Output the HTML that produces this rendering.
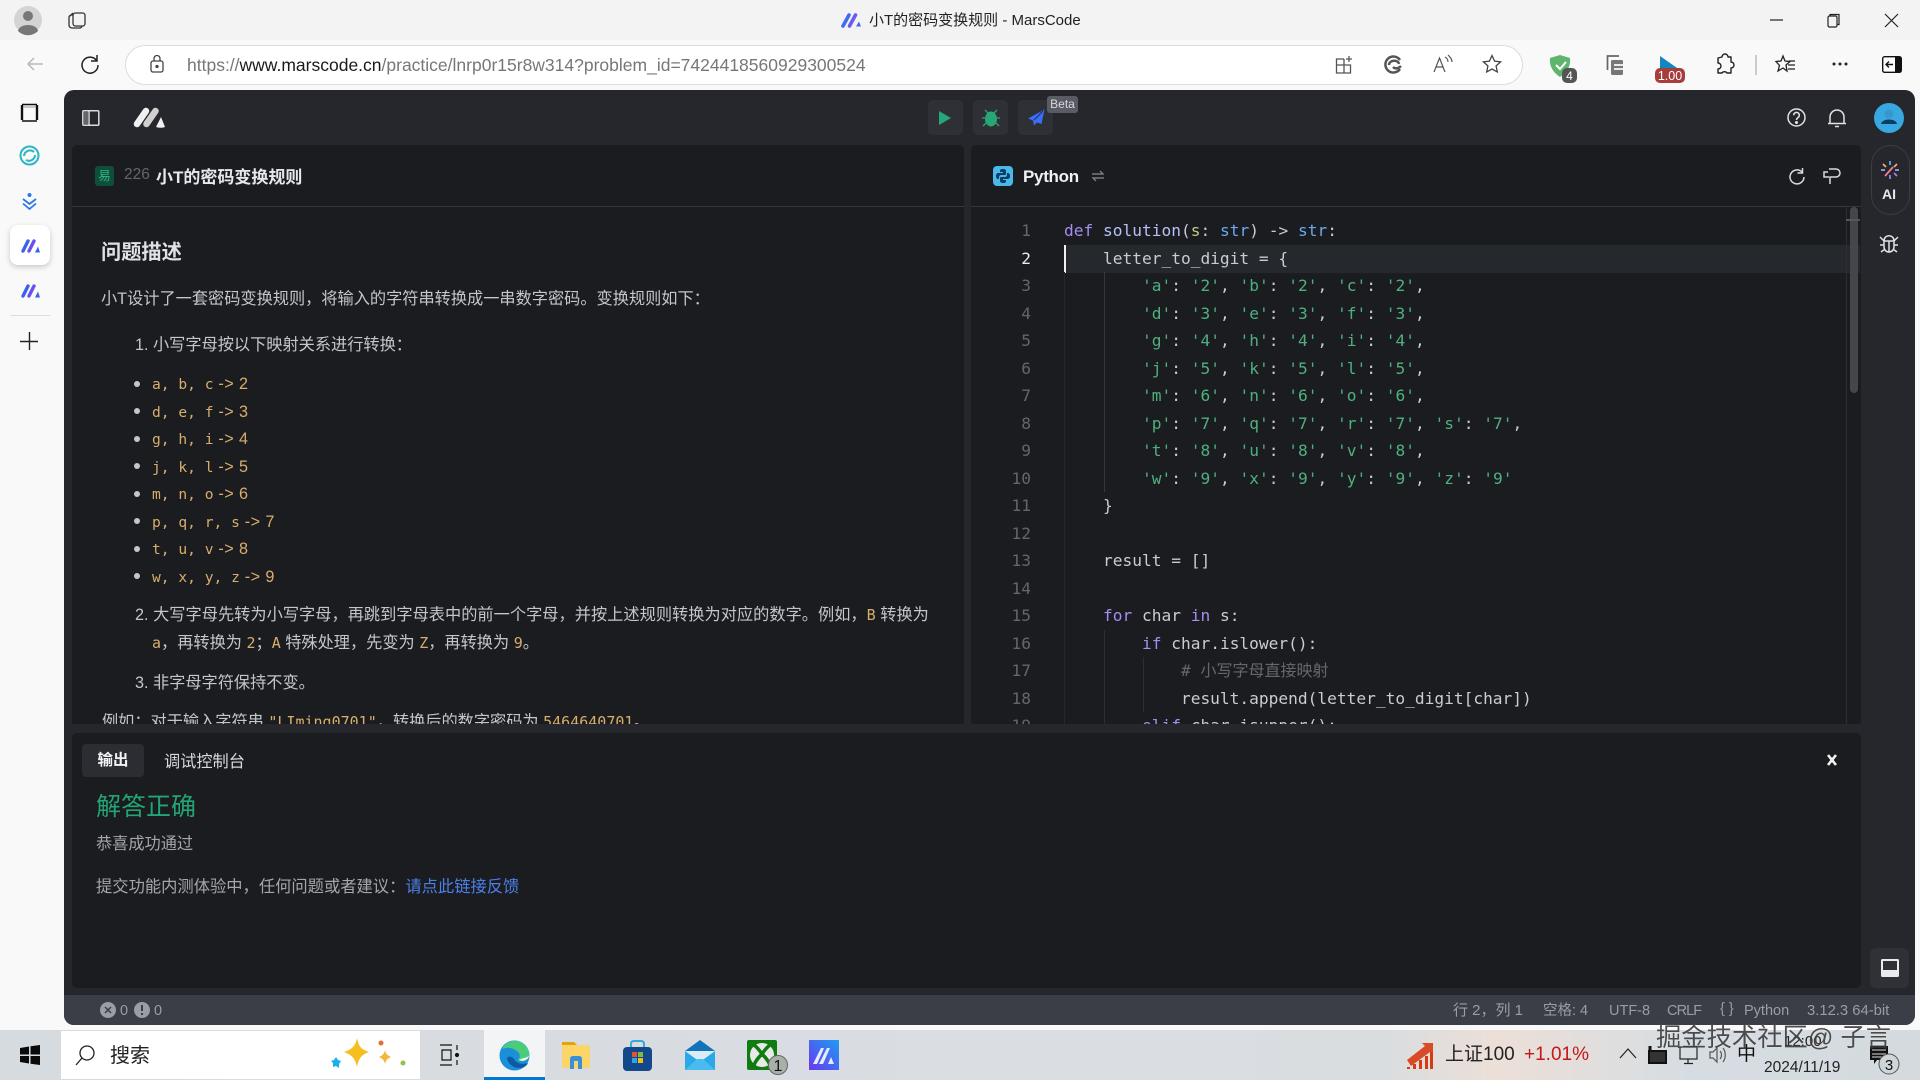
<!DOCTYPE html>
<html lang="zh-CN"><head><meta charset="utf-8"><title>小T的密码变换规则 - MarsCode</title>
<style>
*{box-sizing:border-box;margin:0;padding:0}
html,body{width:1920px;height:1080px;overflow:hidden;background:#f9f9f9;font-family:"Liberation Sans","Noto Sans CJK SC",sans-serif}
.a{position:absolute}
.t{position:absolute;white-space:nowrap;line-height:20px;height:20px}
svg{position:absolute;overflow:visible}
.code{position:absolute;left:1064px;top:217.5px;font:16.2px/27.5px "DejaVu Sans Mono","Noto Sans CJK SC",monospace;color:#c9ccd2;white-space:pre}
.code div{height:27.5px}
.ln{position:absolute;left:980px;width:51px;top:217.5px;font:16.2px/27.5px "DejaVu Sans Mono",monospace;color:#63666c;text-align:right}
.ln div{height:27.5px}
.k{color:#a48cf0}.f{color:#b6c1f5}.p{color:#c6c98a}.b{color:#6aa9ef}.s{color:#4fb07f}.c{color:#64676d}
.m{font-family:"DejaVu Sans Mono",monospace;font-size:14.6px;color:#d9ae6c}
.m i{font-style:normal;font-family:"Liberation Sans";font-size:16.2px;letter-spacing:.4px}
.body{color:#c3c6cc;font-size:16.2px}
.body .m{font-size:15px}
.st{font-size:14.5px;color:#9a9da3;top:1001px}
</style></head><body>

<!-- browser chrome -->
<div class="a" style="left:0;top:0;width:1920px;height:40px;background:#f3f3f3"></div>
<svg style="left:14px;top:6px" width="28" height="28" viewBox="0 0 28 28"><circle cx="14" cy="14" r="14" fill="#d4d4d4"/><circle cx="14" cy="10" r="5" fill="#777"/><path d="M4 25c1-8 19-8 20 0a14 14 0 0 1-20 0z" fill="#777"/></svg>
<svg style="left:67px;top:10px" width="20" height="20" viewBox="0 0 20 20" fill="none" stroke="#333" stroke-width="1.3"><rect x="6" y="3" width="12" height="13" rx="2.5"/><path d="M6 5H4.500A2.500 2.500 0 0 0 2 7.500V15a3 3 0 0 0 3 3h7.500a2.500 2.500 0 0 0 2.500-2M3 6l3-3"/></svg>
<svg style="left:840px;top:12px" width="22" height="16" viewBox="0 0 22 16" fill="none" stroke-linecap="round"><path d="M3 14 9 3" stroke="#3d6ef2" stroke-width="3.600"/><path d="M9.500 14 15.500 3" stroke="#6a5cf0" stroke-width="3.600"/><path d="M16 14.500l3-5 2 5z" fill="#4a66ee"/></svg>
<div class="t" style="left:869px;top:11px;font-size:15px;color:#222">小T的密码变换规则 - MarsCode</div>
<svg style="left:1768px;top:14px" width="140" height="14" fill="none" stroke="#222" stroke-width="1.200"><path d="M2 6h13"/><rect x="60" y="2" width="9" height="11" rx="1.500"/><path d="M62 2V.5h9v10h-2M117 0l13 13M130 0l-13 13"/></svg>

<!-- address bar -->
<div class="a" style="left:125px;top:45px;width:1398px;height:40px;background:#fff;border:1.500px solid #dcdcdc;border-radius:20px"></div>
<svg style="left:26px;top:55px" width="18" height="18" fill="none" stroke="#b9b9b9" stroke-width="1.500"><path d="M17 9H2M8 3 2 9l6 6"/></svg>
<svg style="left:80px;top:54px" width="20" height="20" fill="none" stroke="#222" stroke-width="1.500"><path d="M16.500 6.500A8 8 0 1 0 18 11M17 1v6h-6"/></svg>
<svg style="left:150px;top:55px" width="15" height="18" fill="none" stroke="#444" stroke-width="1.300"><rect x="1" y="6" width="12" height="11" rx="2"/><path d="M4 6V3.500a3 3 0 0 1 6 0V6"/><circle cx="7" cy="11.500" r="1" fill="#444"/></svg>
<div class="t" style="left:187px;top:55px;font-size:17.5px;color:#777">https://<span style="color:#1a1a1a">www.marscode.cn</span>/practice/lnrp0r15r8w314?problem_id=7424418560929300524</div>
<svg style="left:1334px;top:55px" width="20" height="20" fill="none" stroke="#555" stroke-width="1.300"><path d="M10 4H2.500v14h14v-8H2.500M10 4v14M15 1v6M12 4h6"/></svg>
<svg style="left:1383px;top:54px" width="20" height="20" fill="none" stroke="#555" stroke-width="2.500"><path d="M17 6A8 8 0 1 0 17 15M6 11c0-5 9-6 10-1M10 13c2 2 5 2 8-1"/></svg>
<svg style="left:1433px;top:54px" width="20" height="20" fill="none" stroke="#555" stroke-width="1.200"><path d="M1 18 6.500 4 12 18M3 13h7M12 3c2 1 3 3 3 5M15 1c2 2 4 4 4 7"/></svg>
<svg style="left:1482px;top:54px" width="20" height="20" fill="none" stroke="#444" stroke-width="1.300"><path d="m10 1.500 2.600 5.600 6 .700-4.500 4.100 1.200 6L10 15l-5.300 2.900 1.200-6L1.400 7.800l6-.700z"/></svg>
<svg style="left:1549px;top:54px" width="30" height="30"><path d="M1 4 11 1l10 3c1 9-4 15-10 19C5 19 0 13 1 4z" fill="#5fb56b"/><path d="m7 11 4 4 6-7" stroke="#fff" stroke-width="2" fill="none"/><rect x="13" y="14" width="15" height="15" rx="5" fill="#555"/><text x="20.500" y="26" font-size="12" fill="#fff" text-anchor="middle" font-family="Liberation Sans">4</text></svg>
<svg style="left:1605px;top:55px" width="20" height="22" fill="none" stroke="#666" stroke-width="1.700"><path d="M14 1H2.500v14"/><rect x="6" y="5" width="12" height="15" rx="1.500" fill="#777" stroke="none"/><path d="M9 10h9M9 14h9" stroke="#f9f9f9"/></svg>
<svg style="left:1654px;top:56px" width="32" height="28"><path d="M6 0v14h20z" fill="#1186c1"/><rect x="1" y="12" width="30" height="15" rx="5" fill="#a83d3d"/><text x="16" y="24" font-size="12.500" fill="#fff" text-anchor="middle" font-family="Liberation Sans">1.00</text></svg>
<svg style="left:1715px;top:54px" width="20" height="22" fill="none" stroke="#222" stroke-width="1.400"><path d="M7 3a3 3 0 0 1 6 0h3v5a3 3 0 0 1 0 6v5h-4a3 3 0 0 0-5 0H3v-4a3 3 0 0 0 0-6V4z" stroke-linejoin="round"/></svg>
<div class="a" style="left:1755px;top:55px;width:1.500px;height:20px;background:#ccc"></div>
<svg style="left:1775px;top:55px" width="22" height="20" fill="none" stroke="#222" stroke-width="1.300"><path d="m8 1 2 5 5 .5-4 3.500 1 6-4-3-5 3 1.500-5.500L1 6.500l5-.5zM14 6h6M13 10h7M13 14h7"/></svg>
<svg style="left:1832px;top:62px" width="16" height="4" fill="#222"><circle cx="2" cy="2" r="1.500"/><circle cx="8" cy="2" r="1.500"/><circle cx="14" cy="2" r="1.500"/></svg>
<svg style="left:1882px;top:56px" width="20" height="17"><rect x=".7" y=".7" width="18.600" height="15.600" rx="2" fill="#fff" stroke="#111" stroke-width="1.400"/><rect x="13" y="1" width="6" height="15" fill="#111"/><path d="M11 8.500H4M7 5.500l-3 3 3 3" stroke="#111" fill="none" stroke-width="1.400"/></svg>

<!-- left sidebar -->
<svg style="left:20px;top:103px" width="19" height="19" fill="none"><path d="M2 17V2M17 17V2" stroke="#111" stroke-width="2.400"/><path d="M2 1.500h15M2 18h15" stroke="#111" stroke-width="1.400"/><path d="M3 4h13" stroke="#999" stroke-width="1"/></svg>
<svg style="left:19px;top:145px" width="21" height="21" fill="none" stroke="#2cb5c5" stroke-width="2"><circle cx="10.500" cy="10.500" r="9"/><path d="M5 11a6 6 0 0 1 10-4M16 10a6 6 0 0 1-9 5"/></svg>
<svg style="left:20px;top:192px" width="19" height="18" fill="none" stroke="#2878e8" stroke-width="1.800"><path d="M3 7l6.500 5L16 7M3 11.500 9.500 17 16 11.500"/><circle cx="9.500" cy="3" r="2" fill="#2878e8" stroke="none"/></svg>
<div class="a" style="left:10px;top:225px;width:40px;height:40px;background:#fff;border-radius:8px;box-shadow:0 2px 6px rgba(0,0,0,.2)"></div>
<svg style="left:20px;top:238px" width="21" height="15" viewBox="0 0 21 15" fill="none" stroke-linecap="round"><path d="M3 13 8 3" stroke="#3d60ee" stroke-width="3.400"/><path d="M9 13 14 3" stroke="#6a50ee" stroke-width="3.400"/><path d="M15 14.500l3-6 2 6z" fill="#3d60ee"/></svg>
<svg style="left:20px;top:283px" width="21" height="15" viewBox="0 0 21 15" fill="none" stroke-linecap="round"><path d="M3 13 8 3" stroke="#3d60ee" stroke-width="3.400"/><path d="M9 13 14 3" stroke="#6a50ee" stroke-width="3.400"/><path d="M15 14.500l3-6 2 6z" fill="#3d60ee"/></svg>
<div class="a" style="left:10px;top:315px;width:40px;height:1px;background:#ddd"></div>
<svg style="left:20px;top:332px" width="18" height="18" stroke="#222" stroke-width="1.400"><path d="M9.500 0v18M0 9.500h18"/></svg>

<!-- app -->
<div class="a" style="left:64px;top:90px;width:1851px;height:935px;background:#25272c;border-radius:10px"></div>
<div class="a" style="left:64px;top:995px;width:1851px;height:30px;background:#3c3e47;border-radius:0 0 10px 10px"></div>
<svg style="left:82px;top:110px" width="18" height="16" fill="none" stroke="#d8dade" stroke-width="1.500"><rect x=".8" y=".8" width="16" height="14.400" rx="1"/><path d="M7 1v14"/><rect x="2" y="2" width="4.500" height="12" fill="#666" stroke="none"/></svg>
<svg style="left:132px;top:106px" width="35" height="22" viewBox="0 0 35 22" fill="none" stroke-linecap="round"><path d="M5 18 14 5" stroke="#f0f0f0" stroke-width="6.500"/><path d="M14.500 18 23.500 5" stroke="#cfcfcf" stroke-width="6.500"/><path d="M24 21l5-10 4 10q-4 1.500-9 0z" fill="#f0f0f0"/></svg>
<div class="a" style="left:928px;top:100px;width:35px;height:35px;background:#2e3036;border-radius:5px"></div>
<div class="a" style="left:973px;top:100px;width:35px;height:35px;background:#2e3036;border-radius:5px"></div>
<div class="a" style="left:1018px;top:100px;width:35px;height:35px;background:#2e3036;border-radius:5px"></div>
<svg style="left:939px;top:111px" width="12" height="14"><path d="M0 0 12 7 0 14z" fill="#27a776"/></svg>
<svg style="left:981px;top:108px" width="20" height="20" fill="#27a776" stroke="#27a776" stroke-width="1.300"><ellipse cx="10" cy="11" rx="6" ry="7.500" stroke="none"/><path d="M4 2l3 3M16 2l-3 3M1 10h3M19 10h-3M2 18l3-3M18 18l-3-3" fill="none"/></svg>
<svg style="left:1028px;top:109px" width="17" height="17"><path d="M16.500.5 0 9.500l5 2 1 5 3-3 4.500 1.500z" fill="#3c6ef5"/><path d="M15 2 6 11" stroke="#1a2a66"/></svg>
<div class="a" style="left:1047px;top:96px;width:31px;height:17px;background:#5a5c65;border-radius:3px;color:#d8d8da;font-size:12px;line-height:17px;text-align:center">Beta</div>
<svg style="left:1787px;top:108px" width="19" height="19" fill="none" stroke="#e0e2e6" stroke-width="1.500"><circle cx="9.500" cy="9.500" r="8.500"/><path d="M6.700 7.200a2.800 2.800 0 1 1 4.400 2.300c-1 .7-1.600 1.200-1.600 2.500"/><circle cx="9.500" cy="14.500" r=".8" fill="#e0e2e6"/></svg>
<svg style="left:1828px;top:108px" width="18" height="20" fill="none" stroke="#e0e2e6" stroke-width="1.500"><path d="M2 15.500V9a7 7 0 0 1 14 0v6.500zM0 15.500h18M7 18.500h4"/></svg>
<svg style="left:1874px;top:103px" width="30" height="30"><circle cx="15" cy="15" r="15" fill="#3aa8e0"/><circle cx="15" cy="11" r="4.500" fill="#3498cc"/><path d="M7 21c1-6 15-6 16 0z" fill="#0c3c66"/></svg>

<!-- problem panel -->
<div class="a" style="left:72px;top:145px;width:892px;height:579px;background:#1a1c20;border-radius:5px 5px 0 0;overflow:hidden">
  <div class="a" style="left:0;top:61px;width:892px;height:1px;background:#35373c"></div>
</div>
<div class="a" style="left:95px;top:166px;width:19px;height:20px;background:#0f4e3a;border-radius:3px;color:#31b585;font-size:12.500px;line-height:20px;text-align:center">易</div>
<div class="t" style="left:124px;top:165px;font-size:15.500px;color:#63666c">226</div>
<div class="t" style="left:156px;top:167.500px;font-size:17px;font-weight:700;color:#e6e8ea">小T的密码变换规则</div>
<div class="t" style="left:101px;top:242.500px;font-size:20.200px;font-weight:700;color:#dfe1e4">问题描述</div>
<div class="t body" style="left:101px;top:289px">小T设计了一套密码变换规则，将输入的字符串转换成一串数字密码。变换规则如下：</div>
<div class="t body" style="left:135px;top:334.500px">1. 小写字母按以下映射关系进行转换：</div>
<div class="a" style="left:132px;top:370px;width:40px;height:230px;color:#c3c6cc">
  <div class="a" style="left:2px;top:10.500px;width:6px;height:6px;border-radius:50%;background:#c3c6cc"></div>
  <div class="a" style="left:2px;top:38px;width:6px;height:6px;border-radius:50%;background:#c3c6cc"></div>
  <div class="a" style="left:2px;top:65.500px;width:6px;height:6px;border-radius:50%;background:#c3c6cc"></div>
  <div class="a" style="left:2px;top:93px;width:6px;height:6px;border-radius:50%;background:#c3c6cc"></div>
  <div class="a" style="left:2px;top:120.500px;width:6px;height:6px;border-radius:50%;background:#c3c6cc"></div>
  <div class="a" style="left:2px;top:148px;width:6px;height:6px;border-radius:50%;background:#c3c6cc"></div>
  <div class="a" style="left:2px;top:175.500px;width:6px;height:6px;border-radius:50%;background:#c3c6cc"></div>
  <div class="a" style="left:2px;top:203px;width:6px;height:6px;border-radius:50%;background:#c3c6cc"></div>
</div>
<div class="t m" style="left:152px;top:374px">a, b, c<i> -&gt; 2</i></div>
<div class="t m" style="left:152px;top:401.500px">d, e, f<i> -&gt; 3</i></div>
<div class="t m" style="left:152px;top:429px">g, h, i<i> -&gt; 4</i></div>
<div class="t m" style="left:152px;top:456.500px">j, k, l<i> -&gt; 5</i></div>
<div class="t m" style="left:152px;top:484px">m, n, o<i> -&gt; 6</i></div>
<div class="t m" style="left:152px;top:511.500px">p, q, r, s<i> -&gt; 7</i></div>
<div class="t m" style="left:152px;top:539px">t, u, v<i> -&gt; 8</i></div>
<div class="t m" style="left:152px;top:566.500px">w, x, y, z<i> -&gt; 9</i></div>
<div class="t body" style="left:135px;top:605.300px;letter-spacing:.03px">2. 大写字母先转为小写字母，再跳到字母表中的前一个字母，并按上述规则转换为对应的数字。例如，<span class="m">B</span> 转换为</div>
<div class="t body" style="left:152px;top:632.500px"><span class="m">a</span>，再转换为 <span class="m">2</span>；<span class="m">A</span> 特殊处理，先变为 <span class="m">Z</span>，再转换为 <span class="m">9</span>。</div>
<div class="t body" style="left:135px;top:672.500px">3. 非字母字符保持不变。</div>
<div class="a" style="left:102px;top:708px;width:800px;height:16px;overflow:hidden"><div class="t body" style="left:0;top:4px">例如：对于输入字符串 <span class="m">"LIming0701"</span>，转换后的数字密码为 <span class="m">5464640701</span>。</div></div>

<!-- editor panel -->
<div class="a" style="left:971px;top:145px;width:890px;height:579px;background:#1a1c20;border-radius:5px 5px 0 0">
  <div class="a" style="left:0;top:61px;width:890px;height:1px;background:#35373c"></div>
</div>
<svg style="left:993px;top:166px" width="20" height="20"><rect width="20" height="20" rx="4" fill="#4ab8ea"/><path d="M10 3c-3 0-3 1-3 3h3v1H5c-2 0-2 3-2 3s0 3 2 3h1v-2c0-1 1-2 2-2h4c1 0 1-1 1-2V5c0-1-1-2-3-2z" fill="#0c3f63"/><path d="M10 17c3 0 3-1 3-3h-3v-1h5c2 0 2-3 2-3s0-3-2-3h-1v2c0 1-1 2-2 2H8c-1 0-1 1-1 2v2c0 1 1 2 3 2z" fill="#0c3f63"/></svg>
<div class="t" style="left:1023px;top:167px;font-size:17px;font-weight:700;color:#f0f1f3;letter-spacing:-.3px">Python</div>
<svg style="left:1092px;top:170px" width="12" height="12" stroke="#8a8d93" stroke-width="1.200" fill="none"><path d="M0 4h11L8 1M12 8H1l3 3"/></svg>
<svg style="left:1788px;top:168px" width="17" height="17" fill="none" stroke="#d8dade" stroke-width="1.500"><path d="M14 4a7 7 0 1 0 2 5M14.500 0v5h-5"/></svg>
<svg style="left:1823px;top:167px" width="18" height="18" fill="none" stroke="#d8dade" stroke-width="1.500"><path d="M6 2h7a4 4 0 0 1 0 8H7v7M5 5H1v5h5"/></svg>
<div class="a" style="left:1064px;top:245px;width:796px;height:27.500px;background:#25282d"></div>
<div class="a" style="left:1064px;top:245px;width:2px;height:27.500px;background:#f0f0f0"></div>
<div class="a" style="left:1064px;top:272px;width:1px;height:452px;background:#26282d"></div>
<div class="a" style="left:1104px;top:272px;width:1px;height:220px;background:#35373c"></div>
<div class="a" style="left:1104px;top:630px;width:1px;height:94px;background:#2c2e33"></div>
<div class="a" style="left:1143px;top:657px;width:1px;height:55px;background:#2c2e33"></div>
<div class="a" style="left:1846px;top:206px;width:1px;height:518px;background:#2c2e33"></div>
<div class="a" style="left:1850px;top:207px;width:8px;height:186px;background:#44464c;border-radius:4px"></div>
<div class="a" style="left:1846px;top:219px;width:14px;height:2px;background:#55575c"></div>
<div class="a" style="left:971px;top:207px;width:880px;height:517px;overflow:hidden">
 <div class="ln" style="left:9px;top:10px"><div>1</div><div style="color:#e8eaee">2</div><div>3</div><div>4</div><div>5</div><div>6</div><div>7</div><div>8</div><div>9</div><div>10</div><div>11</div><div>12</div><div>13</div><div>14</div><div>15</div><div>16</div><div>17</div><div>18</div><div>19</div></div>
 <div class="code" style="left:93px;top:10px"><div><span class="k">def</span> <span class="f">solution</span>(<span class="p">s</span>: <span class="b">str</span>) -&gt; <span class="b">str</span>:</div><div>    letter_to_digit = {</div><div>        <span class="s">'a'</span>: <span class="s">'2'</span>, <span class="s">'b'</span>: <span class="s">'2'</span>, <span class="s">'c'</span>: <span class="s">'2'</span>,</div><div>        <span class="s">'d'</span>: <span class="s">'3'</span>, <span class="s">'e'</span>: <span class="s">'3'</span>, <span class="s">'f'</span>: <span class="s">'3'</span>,</div><div>        <span class="s">'g'</span>: <span class="s">'4'</span>, <span class="s">'h'</span>: <span class="s">'4'</span>, <span class="s">'i'</span>: <span class="s">'4'</span>,</div><div>        <span class="s">'j'</span>: <span class="s">'5'</span>, <span class="s">'k'</span>: <span class="s">'5'</span>, <span class="s">'l'</span>: <span class="s">'5'</span>,</div><div>        <span class="s">'m'</span>: <span class="s">'6'</span>, <span class="s">'n'</span>: <span class="s">'6'</span>, <span class="s">'o'</span>: <span class="s">'6'</span>,</div><div>        <span class="s">'p'</span>: <span class="s">'7'</span>, <span class="s">'q'</span>: <span class="s">'7'</span>, <span class="s">'r'</span>: <span class="s">'7'</span>, <span class="s">'s'</span>: <span class="s">'7'</span>,</div><div>        <span class="s">'t'</span>: <span class="s">'8'</span>, <span class="s">'u'</span>: <span class="s">'8'</span>, <span class="s">'v'</span>: <span class="s">'8'</span>,</div><div>        <span class="s">'w'</span>: <span class="s">'9'</span>, <span class="s">'x'</span>: <span class="s">'9'</span>, <span class="s">'y'</span>: <span class="s">'9'</span>, <span class="s">'z'</span>: <span class="s">'9'</span></div><div>    }</div><div> </div><div>    result = []</div><div> </div><div>    <span class="k">for</span> char <span class="k">in</span> s:</div><div>        <span class="k">if</span> char.islower():</div><div>            <span class="c"># <span style="font-size:16px">小写字母直接映射</span></span></div><div>            result.append(letter_to_digit[char])</div><div>        <span class="k">elif</span> char.isupper():</div></div>
</div>
<!-- AI capsule -->
<div class="a" style="left:1870.500px;top:145px;width:39px;height:70px;border:1.500px solid #3a3c42;border-radius:20px"></div>
<svg style="left:1881px;top:161px" width="18" height="18" stroke-width="1.800" fill="none"><path d="M9 0v4" stroke="#5aa7f0"/><path d="M2 3l3 3M16 3l-3 3" stroke="#f0b060"/><path d="M0 9h4M14 9h4" stroke="#a0a0f0"/><path d="M12 6 4 15" stroke="#f08090"/><path d="M13 12l3 3M9 14v4" stroke="#a080e0"/></svg>
<div class="t" style="left:1882px;top:184px;font-size:14px;font-weight:700;color:#e6e8ec">AI</div>
<svg style="left:1880px;top:234px" width="18" height="20" fill="none" stroke="#e0e2e6" stroke-width="1.500"><path d="M4 7c0-7 10-7 10 0M4 7h10v6a5 5 0 0 1-10 0zM9 7v11M0 3l4 4M18 3l-4 4M0 11h4M14 11h4M1 18l4-3M17 18l-4-3"/></svg>

<!-- output panel -->
<div class="a" style="left:72px;top:733px;width:1789px;height:255px;background:#1a1c20;border-radius:5px"></div>
<div class="a" style="left:82px;top:744px;width:62px;height:33px;background:#2b2d33;border-radius:4px;color:#f2f3f5;font-size:15.500px;font-weight:700;line-height:33px;text-align:center">输出</div>
<div class="t" style="left:164px;top:752px;font-size:16.200px;color:#d8dade">调试控制台</div>
<svg style="left:1827px;top:755px" width="10" height="10" stroke="#f2f2f2" stroke-width="2.600"><path d="M1 0l8 10M9 0 1 10"/></svg>
<div class="t" style="left:96px;top:795px;font-size:25px;line-height:24px;color:#22a474">解答正确</div>
<div class="t" style="left:96px;top:833.500px;font-size:16.200px;color:#a3a6ac">恭喜成功通过</div>
<div class="t" style="left:96px;top:876.500px;font-size:16.300px;color:#a3a6ac">提交功能内测体验中，任何问题或者建议：<span style="color:#4d7fe8">请点此链接反馈</span></div>
<div class="a" style="left:1870px;top:948px;width:39px;height:40px;background:#2f3137;border-radius:6px"></div>
<svg style="left:1881px;top:959px" width="18" height="18"><rect width="18" height="18" rx="1.500" fill="#e8eaee"/><rect x="2" y="2" width="14" height="9" fill="#2f3137"/></svg>

<!-- status bar -->
<svg style="left:99px;top:1002px" width="62" height="18"><circle cx="9" cy="8" r="8" fill="#9a9da3"/><path d="M6 5l6 6M12 5l-6 6" stroke="#3c3e47" stroke-width="1.500"/><circle cx="43" cy="8" r="8" fill="#9a9da3"/><path d="M43 3v6M43 11v2" stroke="#3c3e47" stroke-width="2"/></svg>
<div class="t st" style="left:120px">0</div>
<div class="t st" style="left:154px">0</div>
<div class="t st" style="left:1453px;font-size:15px">行 2，列 1</div>
<div class="t st" style="left:1543px">空格: 4</div>
<div class="t st" style="left:1609px">UTF-8</div>
<div class="t st" style="left:1667px;letter-spacing:-.9px">CRLF</div>
<div class="t st" style="left:1720px;top:999px">{ }</div>
<div class="t st" style="left:1744px">Python</div>
<div class="t st" style="left:1807px;font-size:14.8px">3.12.3 64-bit</div>

<!-- taskbar -->
<div class="a" style="left:0;top:1030px;width:1920px;height:50px;background:linear-gradient(90deg,#d6dbe0 0,#dadde2 55%,#d9dde0 72%,#ecdfd8 78%,#d6dde2 88%,#d4dade 100%)"></div>
<svg style="left:20px;top:1045px" width="20" height="20" fill="#0a0a0a"><path d="M0 3l9-1.500V9.500H0zM10.500 1.200 20 0v9.500h-9.500zM0 11h9v7.500L0 17zM10.500 11H20v9l-9.500-1.300z"/></svg>
<div class="a" style="left:61px;top:1031px;width:359px;height:48px;background:#fff"></div>
<svg style="left:75px;top:1045px" width="20" height="21" fill="none" stroke="#222" stroke-width="1.300"><circle cx="12" cy="8" r="7"/><path d="M7 13 1 20"/></svg>
<div class="t" style="left:110px;top:1044px;font-size:20px;line-height:24px;height:24px;color:#222">搜索</div>
<svg style="left:330px;top:1036px" width="78" height="38"><path d="M27 2c2 9 4 11 12 14-8 3-10 6-12 15-2-9-5-12-13-15 8-3 11-5 13-14z" fill="#f6bf1e"/><path d="M55 14c1 4 2 5 6 7-4 2-5 3-6 7-1-4-2-5-6-7 4-2 5-3 6-7z" fill="#f4b63c"/><path d="M6 21l2 3 3 1-2 3 0 4-3-2-3 1 0-4-2-2 3-1z" fill="#19b0ec"/><circle cx="51" cy="7" r="2.500" fill="#e96a3a"/><circle cx="73" cy="27" r="2.500" fill="#8cc34a"/></svg>
<svg style="left:440px;top:1044px" width="20" height="22" stroke="#111" stroke-width="1.200" fill="none"><path d="M0 1h12M0 21h12M2 6h9v10H2zM17 1v5M17 10v2M17 16v5"/><circle cx="17" cy="11" r="1.500" fill="#111"/></svg>
<div class="a" style="left:484px;top:1030px;width:61px;height:50px;background:#f2f4f6"></div>
<div class="a" style="left:484px;top:1077px;width:61px;height:3px;background:#0078d4"></div>
<svg style="left:499px;top:1040px" width="31" height="31" viewBox="0 0 31 31"><circle cx="15.500" cy="15.500" r="15" fill="#1b8fd9"/><path d="M4 7C11-3 29-1 30.500 15c.4 5-7 8-12 5 3-2 3-6 0-8.500C13 7 7 7 4 9z" fill="#4ccb7c"/><path d="M8 18c1 7 9 12 17 9 2-1 3-2 4-4-7 2-12 0-14-4-2-3-6-3-7-1z" fill="#0c59a4"/><path d="M20 20c4 2 9 0 10-4-3 2-7 2-10 4z" fill="#f2f4f6"/></svg>
<svg style="left:562px;top:1042px" width="28" height="27"><path d="M0 3q0-3 3-3h9l3 3h10q3 0 3 3v20H0z" fill="#fbd568"/><path d="M0 0h12l3 3H0z" fill="#e3a40b"/><path d="M8 27V17q0-3 3-3h6q3 0 3 3v10h-4V19h-4v8z" fill="#3a8fd8"/></svg>
<svg style="left:623px;top:1040px" width="29" height="31"><path d="M8 8V4q0-3 3-3h7q3 0 3 3v4" fill="none" stroke="#38a8d8" stroke-width="2"/><rect y="7" width="29" height="24" rx="4" fill="#13488a"/><rect x="9" y="12" width="5" height="5" fill="#e8502f"/><rect x="15" y="12" width="5" height="5" fill="#7ebb42"/><rect x="9" y="18" width="5" height="5" fill="#2ea4e8"/><rect x="15" y="18" width="5" height="5" fill="#f7bc15"/></svg>
<svg style="left:685px;top:1040px" width="30" height="30"><path d="M0 11 15 0l15 11v19H0z" fill="#1273b8"/><path d="M0 11h30v19H0z" fill="#2aa8e8"/><path d="M0 11h30L15 22z" fill="#d9ecf8"/><path d="M0 30l12-11h6l12 11z" fill="#49bbee"/></svg>
<svg style="left:747px;top:1040px" width="42" height="36"><rect width="30" height="30" rx="2" fill="#107c10"/><circle cx="15" cy="15" r="12" fill="#e9e9e9"/><path d="M7 5c4 3 6 6 8 9 2-3 4-6 8-9M7 25c2-5 5-8 8-11 3 3 6 6 8 11" fill="none" stroke="#107c10" stroke-width="3.500"/><circle cx="31" cy="25" r="9.500" fill="#a9b0aa" stroke="#666"/><text x="31" y="31" font-size="16" text-anchor="middle" font-family="Liberation Sans" fill="#111">1</text></svg>
<svg style="left:809px;top:1040px" width="30" height="30"><defs><linearGradient id="g1" x1="0" y1="1" x2="1" y2="0"><stop offset="0" stop-color="#6a38f0"/><stop offset="1" stop-color="#1e9cf0"/></linearGradient></defs><rect width="30" height="30" fill="url(#g1)"/><path d="M4 24 12 8h3L8 24zM10 24l8-16h3l-7 16zM19 24l3-7 3 7z" fill="#e8eaff"/></svg>
<svg style="left:1405px;top:1040px" width="30" height="30"><path d="M2 20 20 6l-3-3h11v12l-3-3L6 26z" fill="#d83b12" opacity=".9"/><path d="M2 27h3v2H2zM8 24h3v5H8zM14 20h3v9h-3zM20 16h3v13h-3zM25 12h3v17h-3z" fill="#d83b12"/></svg>
<div class="t" style="left:1445px;top:1044px;font-size:19px;line-height:22px;height:22px;color:#222">上证100</div>
<div class="t" style="left:1524px;top:1044px;font-size:19px;line-height:22px;height:22px;color:#c41717">+1.01%</div>
<svg style="left:1620px;top:1048px" width="16" height="10" fill="none" stroke="#222" stroke-width="1.200"><path d="M0 10 8 1l8 9"/></svg>
<svg style="left:1648px;top:1046px" width="19" height="18"><rect x="0" y="4" width="19" height="14" fill="#111"/><rect x="2" y="6" width="15" height="10" fill="#333"/><path d="M2 0v5" stroke="#111" stroke-width="3"/></svg>
<svg style="left:1680px;top:1046px" width="18" height="18" fill="none" stroke="#222" stroke-width="1.200"><rect y="1" width="17" height="12"/><path d="M8 13v4M4 17.500h9"/></svg>
<svg style="left:1709px;top:1046px" width="18" height="18" fill="none" stroke="#555" stroke-width="1.200"><path d="M1 6h3l4-4v14l-4-4H1zM11 5c2 2 2 6 0 8M14 2c3 4 3 10 0 14"/></svg>
<div class="t" style="left:1737px;top:1044px;font-size:19px;line-height:22px;height:22px;color:#111">中</div>
<div class="t" style="left:1784px;top:1032px;font-size:15px;color:#222">12:00</div>
<div class="t" style="left:1764px;top:1057.500px;font-size:15.500px;color:#222">2024/11/19</div>
<svg style="left:1870px;top:1046px" width="30" height="32"><path d="M0 0h18v14H7l-3 4v-4H0z" fill="#111"/><path d="M2 4h14M2 8h14M2 11h14" stroke="#ddd"/><circle cx="19" cy="18" r="10" fill="#cfd6d8" stroke="#555"/><text x="19" y="24" font-size="15" text-anchor="middle" font-family="Liberation Sans" fill="#111">3</text></svg>
<!-- watermark -->
<div class="t" style="left:1656px;top:1022px;font-size:25.300px;line-height:32px;height:32px;color:rgba(20,20,20,.75);text-shadow:0 0 1px rgba(255,255,255,.6)">掘金技术社区@ 子言</div>
</body></html>
